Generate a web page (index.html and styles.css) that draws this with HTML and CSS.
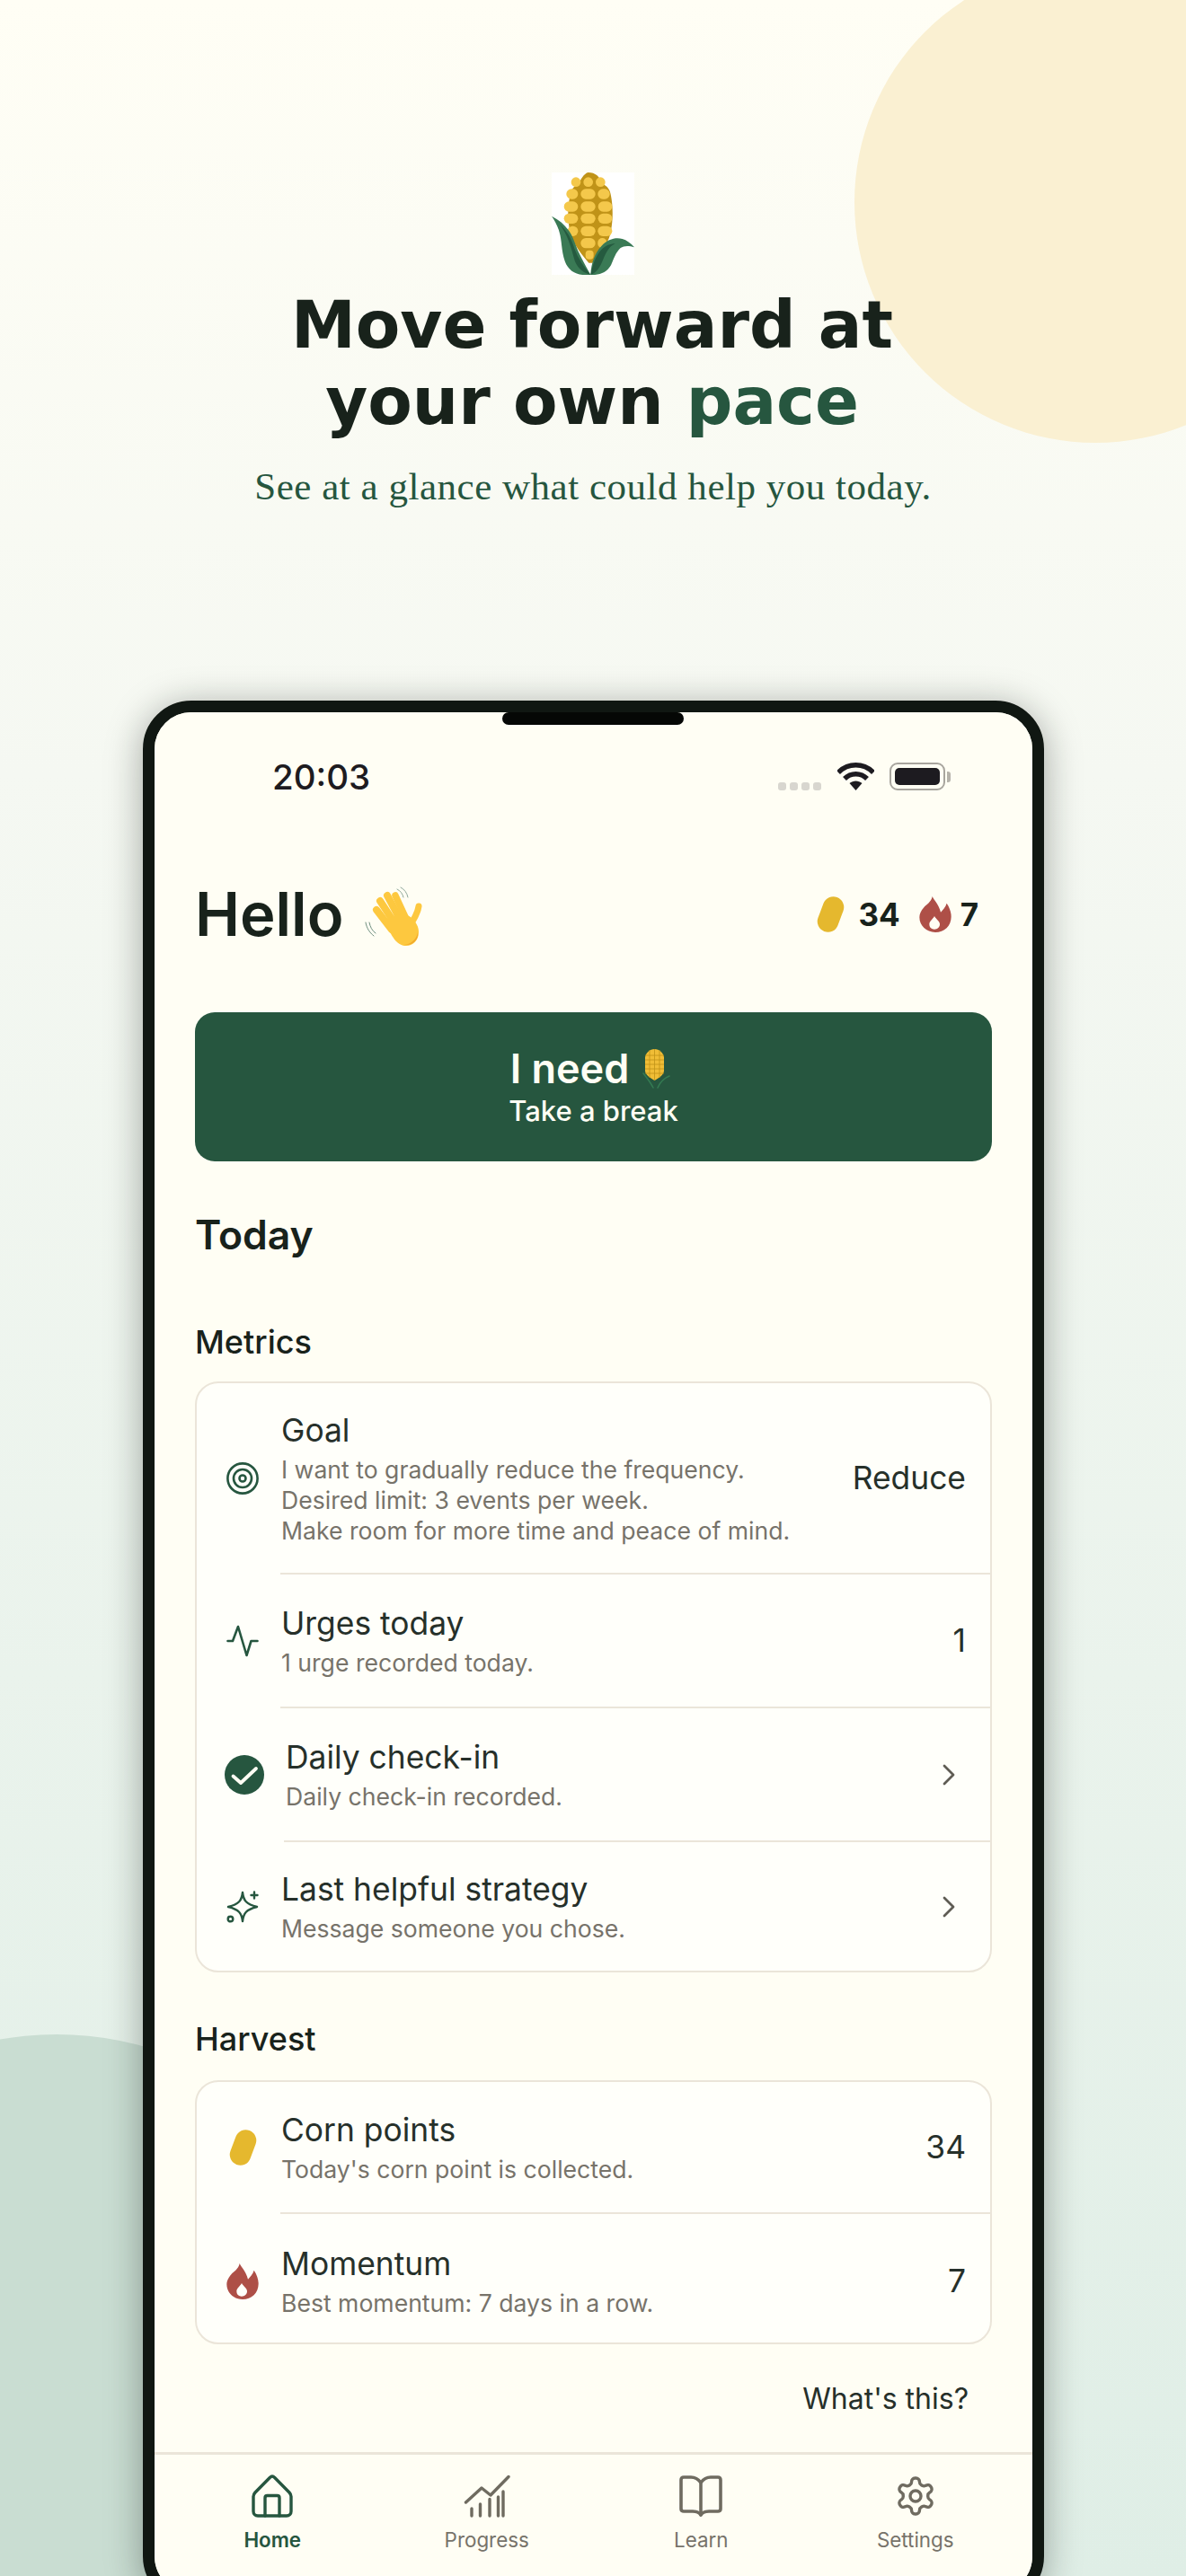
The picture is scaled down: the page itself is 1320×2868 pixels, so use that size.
FILE: index.html
```html
<!DOCTYPE html>
<html lang="en">
<head>
<meta charset="utf-8">
<title>Move forward at your own pace</title>
<link rel="stylesheet" href="styles.css">
</head>
<body>
<div class="page">
  <div class="blob blob-sun"></div>
  <div class="blob blob-sage"></div>

  <header class="hero">
    <svg class="hero-corn" viewBox="102 66 276 342" aria-hidden="true">
      <rect x="102" y="66" width="276" height="342" fill="#fff"/>
      <path d="M224 66c24 0 40 14 46 38 18 6 28 20 30 40 6 30 8 74 0 116-4 34-30 70-62 108h-12c-34-40-60-76-64-110-8-42-6-84 2-116 2-18 12-32 30-38 6-24 24-38 30-38z" fill="#c09318"/>
      <g fill="#f4c84b">
        <circle cx="183" cy="98" r="16"/><circle cx="224" cy="98" r="16"/><circle cx="265" cy="98" r="16"/>
        <rect x="151" y="121" width="39" height="34" rx="17"/><rect x="199" y="121" width="49" height="34" rx="17"/><rect x="256" y="121" width="40" height="34" rx="17"/>
        <rect x="143" y="163" width="47" height="34" rx="17"/><rect x="199" y="163" width="49" height="34" rx="17"/><rect x="257" y="163" width="47" height="34" rx="17"/>
        <rect x="143" y="203" width="47" height="34" rx="17"/><rect x="199" y="203" width="49" height="34" rx="17"/><rect x="257" y="203" width="47" height="34" rx="17"/>
        <rect x="155" y="245" width="35" height="34" rx="17"/><rect x="199" y="245" width="49" height="34" rx="17"/><rect x="256" y="245" width="48" height="34" rx="17"/>
        <rect x="199" y="285" width="49" height="34" rx="17"/><rect x="256" y="285" width="30" height="34" rx="15"/>
        <rect x="215" y="326" width="27" height="30" rx="12"/>
      </g>
      <path d="M102 212c40 20 64 50 76 86 14 40 34 74 54 110-40 4-72-8-86-46-12-36-10-70-18-96-6-22-16-40-26-54z" fill="#3a7a55"/>
      <path d="M128 238c28 26 42 54 50 82 12 32 30 60 54 88-22-6-40-18-52-44-12-40-20-84-52-126z" fill="#255a3f"/>
      <path d="M378 316c-18-6-34-6-46 2-16 14-24 40-32 58-14 24-38 34-68 32 2-40 14-72 36-96 22-24 48-30 70-24 14 4 28 14 40 28z" fill="#3a7a55"/>
      <path d="M232 408c6-32 16-62 36-84 14-14 30-20 46-20-22 10-30 30-40 52-10 26-22 44-42 52z" fill="#255a3f"/>
    </svg>
    <h1 class="hero-title">Move forward at<br>your own <span class="hero-accent">pace</span></h1>
    <p class="hero-sub">See at a glance what could help you today.</p>
  </header>

  <section class="phone">
    <div class="screen">
      <div class="notch"></div>

      <div class="status">
        <span class="status-time">20:03</span>
        <div class="status-right">
          <div class="signal"><i></i><i></i><i></i><i></i></div>
          <svg class="wifi" viewBox="0 0 41 31" aria-hidden="true">
            <path d="M1 11C12 0 29 0 40 11" fill="none" stroke="#1d1b20" stroke-width="5.5"/>
            <path d="M8 18c7-7 18-7 25 0" fill="none" stroke="#1d1b20" stroke-width="5.5"/>
            <path d="M13.500 23c4-3.500 10-3.500 14 0L20.500 31z" fill="#1d1b20"/>
          </svg>
          <div class="battery"><div class="battery-fill"></div></div>
          <div class="battery-nub"></div>
        </div>
      </div>

      <div class="greet">
        <div class="greet-left">
          <h2 class="greet-title">Hello</h2>
          <svg class="wave" viewBox="0 0 64 66" aria-hidden="true">
            <g fill="none" stroke-linecap="round">
              <path d="M36 3c4 2 6 5 7 9M40 1c4 2 7 6 8 11" stroke="#8fa89a" stroke-width="1"/>
              <path d="M1 40c1 6 4 11 9 15M5 40c1 5 3 9 7 12" stroke="#6f8f7f" stroke-width="1"/>
              <g stroke="#fdc83f">
                <path d="M17 16 34 42" stroke-width="8"/>
                <path d="M25 10 40 38" stroke-width="8"/>
                <path d="M34 10 46 36" stroke-width="7.500"/>
                <path d="M13 26 30 48" stroke-width="8"/>
                <path d="M60 22c-1 7-4 12-7 17" stroke-width="7"/>
              </g>
            </g>
            <path d="M23 40c5-8 18-12 28-6 6 5 9 11 9 17 0 9-7 15-14 15-9 0-15-7-23-26z" fill="#fdc83f"/>
            <path d="M44 65c8-1 14-7 15-14 1 8-5 15-15 14z" fill="#f2a92c"/>
          </svg>
        </div>
        <div class="greet-stats">
          <svg class="coin" viewBox="0 0 31 40" aria-hidden="true"><use href="#coin-shape"/></svg>
          <span class="stat-num">34</span>
          <svg class="flame flame-gap" viewBox="487 112 106 120" aria-hidden="true"><use href="#flame-shape"/></svg>
          <span class="stat-num">7</span>
        </div>
      </div>

      <button class="cta" type="button">
        <span class="cta-title">I need
          <svg class="cta-corn" viewBox="0 0 32 44" aria-hidden="true">
            <path d="M1 27c4 5 8 10 11 16M30 30c-5 2-10 6-13 13" fill="none" stroke="#347a52" stroke-width="1.600" stroke-linecap="round"/>
            <path d="M13.500 0C19 0 23 4 24 9v15c0 4-5 8-10.500 11C8 32 3 28 3 24V9C4 4 8 0 13.500 0z" fill="#f0bd36"/>
            <path d="M3 7h21M3 12h21M3 17h21M3 22h21M3 27h21M8 1v31M13.500 0v35M19 1v31" stroke="#c09318" stroke-width=".8" fill="none"/>
          </svg>
        </span>
        <span class="cta-sub">Take a break</span>
      </button>

      <h3 class="today">Today</h3>

      <h4 class="section-label">Metrics</h4>
      <div class="card">
        <div class="row row-tall">
          <svg class="row-icon" viewBox="0 0 36 36" fill="none" stroke="#26563f" stroke-width="2.600" aria-hidden="true">
            <circle cx="18" cy="18" r="16.600"/><circle cx="18" cy="18" r="10"/><circle cx="18" cy="18" r="3.500"/>
          </svg>
          <div class="row-text">
            <div class="row-title">Goal</div>
            <div class="row-sub">I want to gradually reduce the frequency.</div>
            <div class="row-sub">Desired limit: 3 events per week.</div>
            <div class="row-sub">Make room for more time and peace of mind.</div>
          </div>
          <span class="row-value">Reduce</span>
        </div>
        <div class="divider"></div>
        <div class="row row-mid">
          <svg class="row-icon" viewBox="0 0 36 36" fill="none" stroke="#26563f" stroke-width="2.600" stroke-linecap="round" stroke-linejoin="round" aria-hidden="true">
            <path d="M1.500 18h5.500l6-16 9.500 32 5-16h7"/>
          </svg>
          <div class="row-text">
            <div class="row-title">Urges today</div>
            <div class="row-sub">1 urge recorded today.</div>
          </div>
          <span class="row-value">1</span>
        </div>
        <div class="divider"></div>
        <div class="row row-mid">
          <svg class="row-icon row-icon-check" viewBox="0 0 44 44" aria-hidden="true">
            <circle cx="22" cy="22" r="22" fill="#26563f"/>
            <path d="M9.500 23.500l8.500 7.500L35 15" fill="none" stroke="#fffef4" stroke-width="3.800" stroke-linecap="round" stroke-linejoin="round"/>
          </svg>
          <div class="row-text">
            <div class="row-title">Daily check-in</div>
            <div class="row-sub">Daily check-in recorded.</div>
          </div>
          <svg class="chev" viewBox="0 0 16 26" aria-hidden="true"><path d="M3 3l10 10L3 23"/></svg>
        </div>
        <div class="divider divider-wide"></div>
        <div class="row row-end">
          <svg class="row-icon" viewBox="0 0 36 36" fill="none" stroke="#26563f" stroke-width="2.400" stroke-linecap="round" stroke-linejoin="round" aria-hidden="true">
            <path d="M18 2c1 9 4 13 16 16-12 3-15 7-16 16-1-9-4-13-16-16 12-3 15-7 16-16z"/>
            <path d="M31 1.500v7M27.500 5h7"/>
            <circle cx="4.500" cy="31.500" r="2.800"/>
          </svg>
          <div class="row-text">
            <div class="row-title">Last helpful strategy</div>
            <div class="row-sub">Message someone you chose.</div>
          </div>
          <svg class="chev" viewBox="0 0 16 26" aria-hidden="true"><path d="M3 3l10 10L3 23"/></svg>
        </div>
      </div>

      <h4 class="section-label section-label-harvest">Harvest</h4>
      <div class="card card-harvest">
        <div class="row">
          <svg class="row-icon coin-row" viewBox="0 0 31 40" aria-hidden="true"><use href="#coin-shape"/></svg>
          <div class="row-text">
            <div class="row-title">Corn points</div>
            <div class="row-sub">Today's corn point is collected.</div>
          </div>
          <span class="row-value">34</span>
        </div>
        <div class="divider"></div>
        <div class="row row-last">
          <svg class="row-icon flame-row" viewBox="487 112 106 120" aria-hidden="true"><use href="#flame-shape"/></svg>
          <div class="row-text">
            <div class="row-title">Momentum</div>
            <div class="row-sub">Best momentum: 7 days in a row.</div>
          </div>
          <span class="row-value">7</span>
        </div>
      </div>

      <div class="help"><span class="help-link">What's this?</span></div>

      <nav class="tabs">
        <div class="tab tab-active">
          <svg class="tab-icon" viewBox="0 0 52 48" fill="none" stroke="#26563f" stroke-width="3.400" stroke-linecap="round" stroke-linejoin="round" aria-hidden="true">
            <path d="M26 2c1 0 1.800.5 2.500 1.300L45 20c1.200 1.300 2 2.500 2 4.500V41c0 3-2 5-5 5H10c-3 0-5-2-5-5V24.500c0-2 .8-3.200 2-4.500L23.500 3.300C24.200 2.500 25 2 26 2z"/>
            <path d="M18 46V26c0-1.500 1-2.500 2.500-2.500h11c1.500 0 2.500 1 2.500 2.500v20"/>
          </svg>
          <span class="tab-label">Home</span>
        </div>
        <div class="tab">
          <svg class="tab-icon" viewBox="0 0 52 48" fill="none" stroke="#6f6b60" stroke-width="3.400" stroke-linecap="round" stroke-linejoin="round" aria-hidden="true">
            <path d="M2.500 31 20 15l10 8L50 2.500"/>
            <path d="M9 46v-8M18.500 46V33M29 46V27.500M38.500 46V25M44 46V19"/>
          </svg>
          <span class="tab-label">Progress</span>
        </div>
        <div class="tab">
          <svg class="tab-icon" viewBox="0 0 52 48" fill="none" stroke="#6f6b60" stroke-width="3.600" stroke-linecap="round" stroke-linejoin="round" aria-hidden="true">
            <path d="M26 9c-3-4-6-6-11-6H7C5 3 4 4 4 6v32c0 2 1 3 3 3h10c4 0 7 1 9 4 2-3 5-4 9-4h10c2 0 3-1 3-3V6c0-2-1-3-3-3h-8c-5 0-8 2-11 6z"/>
            <path d="M26 9v36"/>
          </svg>
          <span class="tab-label">Learn</span>
        </div>
        <div class="tab">
          <svg class="tab-icon" viewBox="0 0 24 24" fill="none" stroke="#6f6b60" stroke-width="1.700" stroke-linecap="round" stroke-linejoin="round" aria-hidden="true">
            <path d="M12.220 2h-.44a2 2 0 0 0-2 2v.18a2 2 0 0 1-1 1.730l-.43.25a2 2 0 0 1-2 0l-.15-.08a2 2 0 0 0-2.730.73l-.22.38a2 2 0 0 0 .73 2.730l.15.1a2 2 0 0 1 1 1.720v.51a2 2 0 0 1-1 1.740l-.15.09a2 2 0 0 0-.73 2.730l.22.38a2 2 0 0 0 2.730.73l.15-.08a2 2 0 0 1 2 0l.43.25a2 2 0 0 1 1 1.730V20a2 2 0 0 0 2 2h.44a2 2 0 0 0 2-2v-.18a2 2 0 0 1 1-1.730l.43-.25a2 2 0 0 1 2 0l.15.08a2 2 0 0 0 2.730-.73l.22-.39a2 2 0 0 0-.73-2.730l-.15-.08a2 2 0 0 1-1-1.740v-.5a2 2 0 0 1 1-1.740l.15-.09a2 2 0 0 0 .73-2.730l-.22-.38a2 2 0 0 0-2.730-.73l-.15.08a2 2 0 0 1-2 0l-.43-.25a2 2 0 0 1-1-1.730V4a2 2 0 0 0-2-2z"/>
            <circle cx="12" cy="12" r="3"/>
          </svg>
          <span class="tab-label">Settings</span>
        </div>
      </nav>
    </div>
  </section>

  <svg class="defs" aria-hidden="true">
    <defs>
      <g id="coin-shape"><path d="M18.500 12 12.500 28" stroke="#e5b82e" stroke-width="23.500" stroke-linecap="round" fill="none"/></g>
      <g id="flame-shape"><path fill="#ae4f47" fill-rule="evenodd" d="M530 112c6 13 22 28 28 53 8-10 16-17 20-30 10 15 15 30 15 45 0 30-23 52-53 52s-53-22-53-50c0-17 10-27 18-37 13-10 23-20 25-33zM537 178c-7 12-17 17-17 27 0 11 8 17 17 17 10 0 18-7 18-17 0-10-11-15-18-27z"/></g>
    </defs>
  </svg>
</div>
</body>
</html>
```

FILE: styles.css
```css
* { box-sizing: border-box; }

html, body {
  margin: 0;
  padding: 0;
}

body {
  width: 1320px;
  height: 2868px;
  overflow: hidden;
  font-family: "Inter", "Liberation Sans", sans-serif;
  color: #18221b;
}

.page {
  position: relative;
  width: 1320px;
  height: 2868px;
  overflow: hidden;
  background: linear-gradient(180deg, #fffef5 0%, #f5f8f2 30%, #dfeee6 100%);
}

.blob {
  position: absolute;
  border-radius: 50%;
}

.blob-sun {
  left: 951px;
  top: -43px;
  width: 536px;
  height: 536px;
  background: #faf0d2;
}

.blob-sage {
  left: -297px;
  top: 2265px;
  width: 720px;
  height: 720px;
  background: #c9ddd2;
}

.defs {
  position: absolute;
  width: 0;
  height: 0;
}

/* hero */
.hero {
  position: relative;
  display: flex;
  flex-direction: column;
  align-items: center;
  padding-top: 192px;
}

.hero-corn {
  display: block;
  width: 92px;
  height: 114px;
}

.hero-title {
  margin: 14px 2px 0 0;
  font-family: "DejaVu Sans", sans-serif;
  font-weight: 700;
  font-size: 72.200px;
  line-height: 85px;
  text-align: center;
  color: #18221b;
}

.hero-accent { color: #26563f; }

.hero-sub {
  margin: 24px 0 0;
  font-family: "Liberation Serif", serif;
  font-size: 43px;
  letter-spacing: 0.52px;
  line-height: 56px;
  color: #26563f;
}

/* phone */
.phone {
  position: absolute;
  left: 159px;
  top: 780px;
  width: 1003px;
  height: 2120px;
  border: 13px solid #101712;
  border-radius: 54px;
  background: #fffef4;
  box-shadow: 0 6px 40px rgba(16, 24, 20, 0.36);
}

.screen {
  position: relative;
  height: 100%;
  padding: 56px 45px 0;
  overflow: hidden;
  border-radius: 41px;
  background: #fffef4;
}

.notch {
  position: absolute;
  left: 387px;
  top: 0;
  width: 202px;
  height: 14px;
  border-radius: 7px;
  background: #050705;
}

/* status */
.status {
  display: flex;
  justify-content: space-between;
  height: 31px;
  padding: 0 46px 0 86px;
}

.status-time {
  margin-top: 1px;
  font-size: 38.500px;
  line-height: 31px;
  font-weight: 500;
  color: #1d1b20;
}

.status-right {
  display: flex;
  align-items: center;
}

.signal {
  display: flex;
  align-self: flex-end;
  gap: 4px;
  margin-right: 18px;
}

.signal i {
  display: block;
  width: 9px;
  height: 9px;
  border-radius: 3px;
  background: #d8d6cf;
}

.wifi {
  display: block;
  width: 41px;
  height: 31px;
  margin-right: 17px;
}

.battery {
  width: 62px;
  height: 31px;
  padding: 4px;
  border: 2px solid #a8a59e;
  border-radius: 9px;
}

.battery-fill {
  height: 100%;
  border-radius: 5px;
  background: #1d1b20;
}

.battery-nub {
  width: 4px;
  height: 12px;
  margin-left: 2px;
  border-radius: 0 3px 3px 0;
  background: #b5b2aa;
}

/* greeting */
.greet {
  display: flex;
  align-items: center;
  justify-content: space-between;
  height: 80px;
  margin-top: 98px;
  padding-right: 15px;
}

.greet-left {
  display: flex;
  align-items: center;
  gap: 24px;
}

.greet-title {
  margin: 0;
  font-size: 67px;
  line-height: 80px;
  font-weight: 600;
  color: #18221b;
}

.wave {
  display: block;
  width: 64px;
  height: 66px;
  margin-top: 4px;
}

.greet-stats {
  display: flex;
  align-items: center;
}

.coin {
  display: block;
  width: 31px;
  height: 40px;
}

.flame {
  display: block;
  width: 36px;
  height: 40px;
}

.flame-gap { margin-left: 21px; }

.stat-num {
  margin-left: 15px;
  font-size: 35px;
  line-height: 40px;
  font-weight: 700;
  color: #18221b;
}

.flame + .stat-num { margin-left: 10px; }

/* cta */
.cta {
  display: flex;
  flex-direction: column;
  align-items: center;
  justify-content: center;
  width: 887px;
  height: 166px;
  margin-top: 69px;
  padding: 0;
  border: 0;
  border-radius: 22px;
  background: #26563f;
  color: #fffef4;
  font-family: "Inter", "Liberation Sans", sans-serif;
}

.cta-title {
  display: flex;
  align-items: center;
  gap: 15px;
  height: 52px;
  font-size: 45px;
  line-height: 52px;
  font-weight: 600;
}

.cta-corn {
  display: block;
  width: 32px;
  height: 44px;
  margin-right: 6px;
}

.cta-sub {
  margin-top: 2px;
  font-size: 31px;
  line-height: 38px;
  font-weight: 500;
}

/* headings */
.today {
  margin: 54px 0 0;
  font-size: 44.500px;
  line-height: 56px;
  font-weight: 600;
  color: #18221b;
}

.section-label {
  margin: 69px 0 0;
  font-size: 36px;
  line-height: 44px;
  font-weight: 500;
  color: #18221b;
}

.section-label-harvest { margin-top: 52px; }

/* cards */
.card {
  width: 887px;
  margin-top: 22px;
  border: 2px solid #ebe5d9;
  border-radius: 26px;
  background: #fffffa;
}

.card-harvest { margin-top: 24px; }

.row {
  display: flex;
  align-items: center;
  padding: 31.500px 27px 31.500px 33px;
}

.row-tall { padding-top: 30.500px; padding-bottom: 30.500px; }

.row-mid { padding-top: 32.500px; padding-bottom: 32.500px; }

.row-end { padding-top: 30.500px; padding-bottom: 30.500px; }

.row-last { padding-top: 33.500px; padding-bottom: 27.500px; }

.row-icon {
  display: block;
  flex: none;
  width: 36px;
  height: 36px;
  margin-right: 25px;
}

.row-icon-check {
  width: 44px;
  height: 44px;
  margin-left: -2px;
  margin-right: 24px;
}

.coin-row {
  width: 31px;
  height: 40px;
  margin-left: 3px;
  margin-right: 27px;
}

.flame-row {
  height: 40px;
}

.row-text {
  flex: 1;
  min-width: 0;
}

.row-title {
  margin-bottom: 4px;
  font-size: 35.400px;
  line-height: 44px;
  font-weight: 400;
  color: #26302a;
}

.row-sub {
  font-size: 26.600px;
  line-height: 34px;
  font-weight: 400;
  color: #77736a;
}

.row-value {
  font-size: 35.400px;
  line-height: 44px;
  font-weight: 400;
  color: #26302a;
}

.chev {
  display: block;
  flex: none;
  width: 16px;
  height: 26px;
  margin-right: 11px;
}

.chev path {
  fill: none;
  stroke: #5f5c54;
  stroke-width: 2.800;
  stroke-linecap: round;
  stroke-linejoin: round;
}

.divider {
  height: 2px;
  margin-left: 93px;
  background: #ebe5d9;
}

.divider-wide { margin-left: 97px; }

/* help */
.help {
  display: flex;
  justify-content: flex-end;
  margin-top: 41px;
  padding-right: 26px;
}

.help-link {
  font-size: 32px;
  line-height: 40px;
  font-weight: 400;
  color: #26302a;
}

/* tabs */
.tabs {
  display: grid;
  grid-template-columns: repeat(4, 1fr);
  margin: 39px -45px 0;
  padding: 22px 11px 0 12px;
  border-top: 3px solid #ebe5d9;
}

.tab {
  display: flex;
  flex-direction: column;
  align-items: center;
}

.tab-icon {
  display: block;
  width: 52px;
  height: 48px;
}

.tab-label {
  margin-top: 10px;
  font-size: 22.400px;
  line-height: 30px;
  font-weight: 400;
  color: #77736a;
}

.tab-active .tab-label {
  font-weight: 600;
  color: #26563f;
}
```
